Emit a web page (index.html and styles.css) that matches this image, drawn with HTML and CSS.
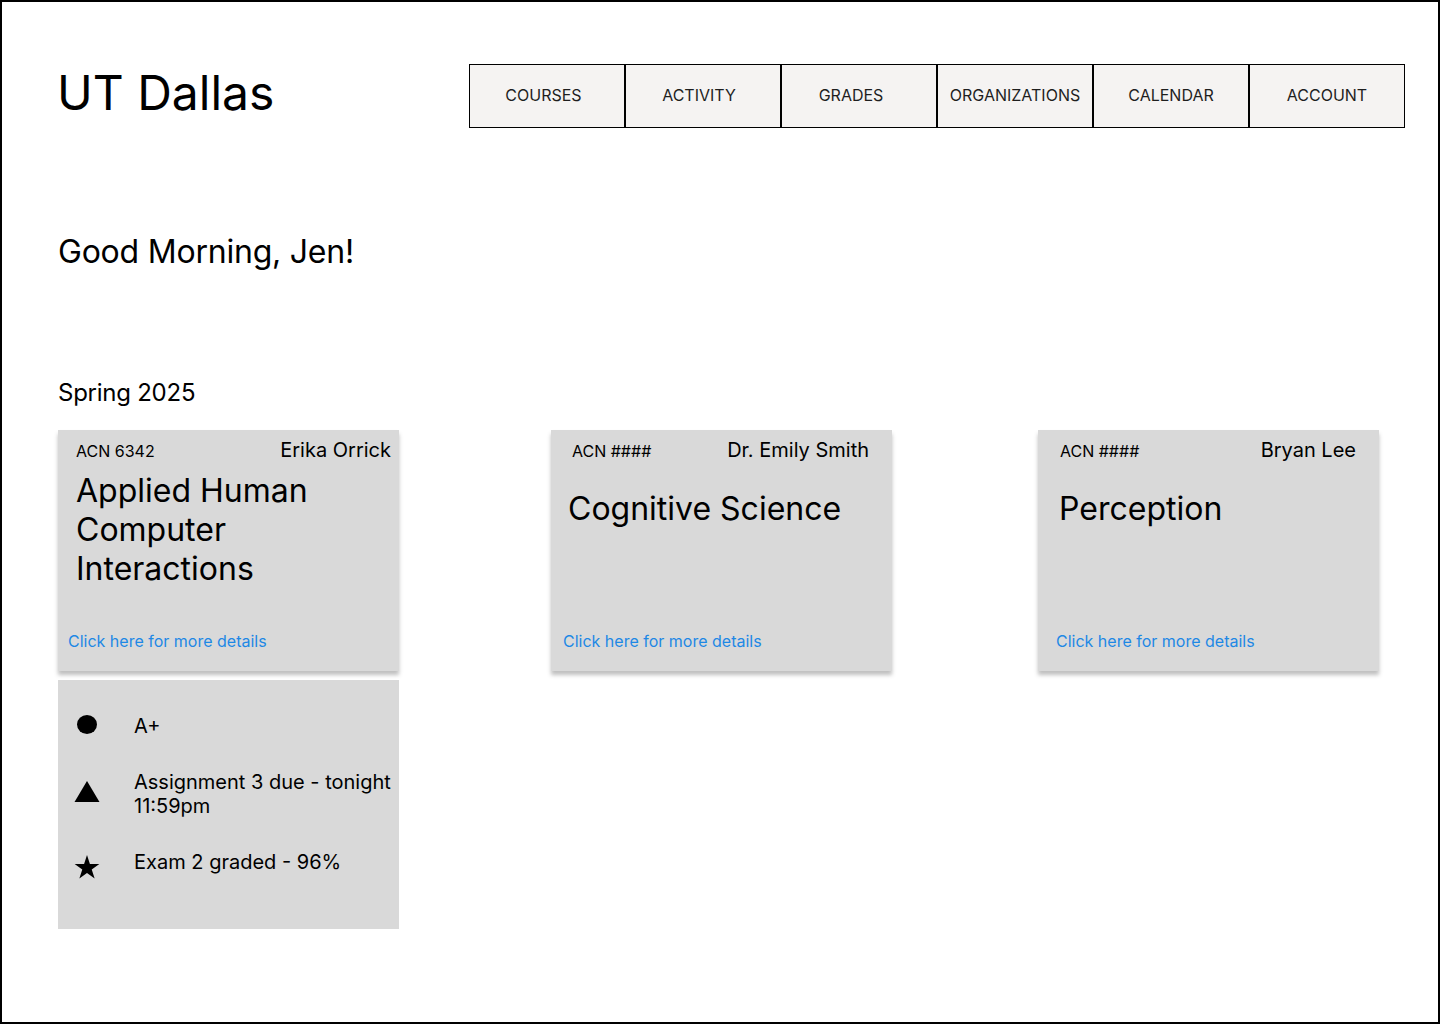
FILE: index.html
```html
<!DOCTYPE html>
<html lang="en">
<head>
<meta charset="utf-8">
<title>UT Dallas</title>
<link rel="stylesheet" href="styles.css">
</head>
<body>
<div class="page">
  <header class="topbar">
    <h1 class="logo">UT Dallas</h1>
    <nav class="nav">
      <a class="nav-item nav-item--courses" href="#">COURSES</a>
      <a class="nav-item nav-item--activity" href="#">ACTIVITY</a>
      <a class="nav-item nav-item--grades" href="#">GRADES</a>
      <a class="nav-item" href="#">ORGANIZATIONS</a>
      <a class="nav-item" href="#">CALENDAR</a>
      <a class="nav-item" href="#">ACCOUNT</a>
    </nav>
  </header>

  <main class="content">
    <h2 class="greeting">Good Morning, Jen!</h2>
    <h3 class="term">Spring 2025</h3>

    <div class="courses">
      <div class="course-col">
        <section class="card card--hci">
          <div class="card-head">
            <span class="code">ACN 6342</span>
            <span class="prof">Erika Orrick</span>
          </div>
          <h4 class="title">Applied Human Computer Interactions</h4>
          <a class="details" href="#">Click here for more details</a>
        </section>

        <section class="activity">
          <div class="activity-row">
            <svg class="icon icon--dot" width="20" height="19" viewBox="0 0 20 19"><ellipse cx="10" cy="9.5" rx="10" ry="9.5" fill="#000"/></svg>
            <span class="activity-text">A+</span>
          </div>
          <div class="activity-row">
            <svg class="icon icon--tri" width="26" height="21" viewBox="0 0 26 21"><polygon points="0.5,21 13,0 25.5,21" fill="#000"/></svg>
            <span class="activity-text">Assignment 3 due - tonight<br>11:59pm</span>
          </div>
          <div class="activity-row">
            <svg class="icon icon--star" width="26" height="24" viewBox="0 0 26 24"><polygon points="13,0 15.921,8.979 25.364,8.983 17.727,14.536 20.641,23.517 13,17.97 5.359,23.517 8.273,14.536 0.636,8.983 10.079,8.979" fill="#000"/></svg>
            <span class="activity-text">Exam 2 graded - 96%</span>
          </div>
        </section>
      </div>

      <div class="course-col">
        <section class="card card--cog">
          <div class="card-head">
            <span class="code">ACN ####</span>
            <span class="prof">Dr. Emily Smith</span>
          </div>
          <h4 class="title">Cognitive Science</h4>
          <a class="details" href="#">Click here for more details</a>
        </section>
      </div>

      <div class="course-col">
        <section class="card card--per">
          <div class="card-head">
            <span class="code">ACN ####</span>
            <span class="prof">Bryan Lee</span>
          </div>
          <h4 class="title">Perception</h4>
          <a class="details" href="#">Click here for more details</a>
        </section>
      </div>
    </div>
  </main>
</div>
</body>
</html>
```

FILE: styles.css
```css
* {
  box-sizing: border-box;
}

html, body {
  margin: 0;
  padding: 0;
  background: #ffffff;
}

body {
  font-family: Inter, "Noto Sans", "Liberation Sans", sans-serif;
  color: #000;
}

.page {
  width: 1440px;
  height: 1024px;
  border: 2px solid #000;
  background: #fff;
  overflow: hidden;
}

/* ---------- header ---------- */
.topbar {
  display: flex;
  align-items: flex-start;
  padding: 62px 33px 0 55px;
}

.logo {
  margin: 0;
  font-size: 48px;
  line-height: 58px;
  font-weight: 400;
  color: #000;
}

.nav {
  display: flex;
  margin-left: auto;
}

.nav-item {
  width: 156px;
  height: 64px;
  border: 1px solid #000;
  background: #f5f3f2;
  display: flex;
  align-items: center;
  justify-content: center;
  padding-bottom: 1px;
  font-size: 16px;
  line-height: 19px;
  color: #1e1e1e;
  text-decoration: none;
}

.nav-item--courses {
  padding-right: 7px;
}

.nav-item--activity {
  padding-right: 8px;
}

.nav-item--grades {
  padding-right: 16px;
}

/* ---------- content ---------- */
.content {
  padding: 0 0 0 56px;
}

.greeting {
  margin: 104px 0 0 0;
  font-size: 32px;
  line-height: 39px;
  font-weight: 400;
  letter-spacing: -0.22px;
}

.term {
  margin: 107px 0 0 0;
  font-size: 24px;
  line-height: 29px;
  font-weight: 400;
  letter-spacing: -0.25px;
}

.courses {
  margin-top: 23px;
  display: grid;
  grid-template-columns: 493px 487px 341px;
  align-items: start;
}

.course-col {
  display: flex;
  flex-direction: column;
  gap: 9px;
}

/* ---------- course card ---------- */
.card {
  width: 341px;
  height: 241px;
  background: #d9d9d9;
  box-shadow: 0 4px 4px rgba(0, 0, 0, 0.25);
  display: flex;
  flex-direction: column;
}

.card-head {
  display: flex;
  justify-content: space-between;
  align-items: baseline;
  padding: 8px 23px 0 21px;
}

.code {
  font-size: 16px;
  line-height: 19px;
  color: #000;
}

.prof {
  font-size: 20px;
  line-height: 24px;
  color: #000;
}

.title {
  margin: 27px 0 0 0;
  padding-left: 17px;
  font-size: 32px;
  line-height: 39px;
  font-weight: 400;
  color: #000;
}

.details {
  margin-top: auto;
  padding: 0 0 20px 12px;
  font-size: 16px;
  line-height: 19px;
  color: #1e88e5;
  text-decoration: none;
}

.card--hci .card-head {
  padding: 8px 8px 0 18px;
}

.card--hci .title {
  margin-top: 9px;
  padding-left: 18px;
  max-width: 260px;
}

.card--hci .details {
  padding-left: 10px;
}

.card--per .card-head {
  padding-left: 22px;
}

.card--per .title {
  padding-left: 21px;
}

.card--per .details {
  padding-left: 18px;
}

/* ---------- activity panel ---------- */
.activity {
  width: 341px;
  height: 249px;
  background: #d9d9d9;
  padding: 34px 0 0 15px;
  display: flex;
  flex-direction: column;
  gap: 32px;
}

.activity-row {
  display: grid;
  grid-template-columns: 28px 1fr;
  column-gap: 33px;
  align-items: start;
}

.icon {
  display: block;
  justify-self: center;
}

.icon--dot {
  margin-top: 1px;
}

.icon--tri {
  margin-top: 11px;
}

.icon--star {
  margin-top: 5px;
}

.activity-text {
  font-size: 20px;
  line-height: 24px;
  color: #000;
  white-space: nowrap;
}
```
